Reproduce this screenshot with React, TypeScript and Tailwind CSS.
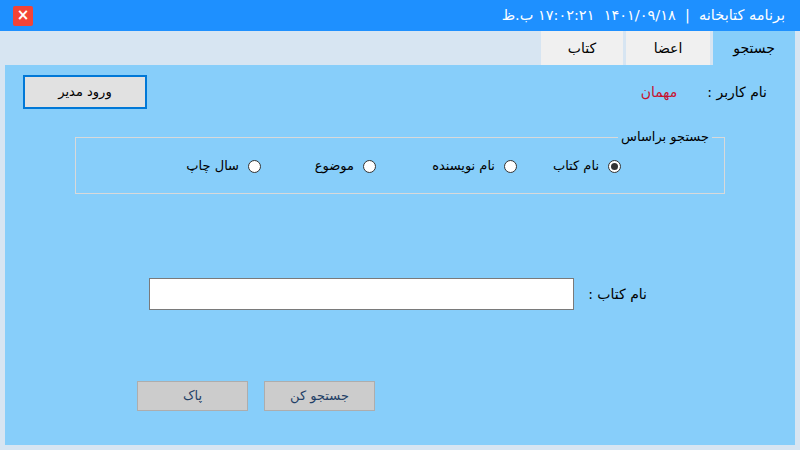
import React, { useState } from "react";

const font = "font-['DejaVu_Sans',sans-serif]";

const options = ["نام کتاب", "نام نویسنده", "موضوع", "سال چاپ"];

const Radio = ({ checked }: { checked: boolean }) => (
    <span className="flex h-[13px] w-[13px] items-center justify-center rounded-full border border-[#333333] bg-white">
        {checked && <span className="h-[7px] w-[7px] rounded-full bg-[#333333]" />}
    </span>
);

const App = () => {
    const [tab, setTab] = useState("جستجو");
    const [option, setOption] = useState("نام کتاب");

    const tabs = [
        { name: "جستجو", w: "w-[82px]" },
        { name: "اعضا", w: "w-[84px]" },
        { name: "کتاب", w: "w-[82px]" },
    ];

    return (
        <div className={`flex h-[450px] w-[800px] flex-col bg-[#d7e5f2] ${font}`}>
            {/* title bar */}
            <div className="flex h-[31px] items-center justify-between bg-[#1e90ff] pl-[13px] pr-[15px]">
                <button className="flex h-[20px] w-[20px] items-center justify-center rounded-[2px] bg-[#f44336] text-[15px] font-bold leading-none text-white">
                    ×
                </button>
                <div dir="rtl" className="text-[14.5px] text-white">
                    برنامه کتابخانه&nbsp; |&nbsp; ۱۴۰۱/۰۹/۱۸&nbsp; ۱۷:۰۲:۲۱ ب.ظ
                </div>
            </div>

            {/* tabs */}
            <div dir="rtl" className="flex h-[34px] pr-[5px]">
                {tabs.map((t) => (
                    <button
                        key={t.name}
                        onClick={() => setTab(t.name)}
                        className={`${t.w} ml-[3px] flex items-center justify-center text-[14px] text-black ${
                            tab === t.name ? "bg-[#87cefa]" : "bg-[#f0f0f0]"
                        }`}
                    >
                        {t.name}
                    </button>
                ))}
            </div>

            {/* panel */}
            <div className="mx-[5px] flex h-[380px] flex-col bg-[#87cefa]">
                <div className="mt-[10px] flex items-center justify-between pl-[18px] pr-[28px]">
                    <button className="h-[34px] w-[124px] border-2 border-[#0078d7] bg-[#e1e1e1] text-[13px] text-black">
                        <span dir="rtl">ورود مدیر</span>
                    </button>
                    <div dir="rtl" className="flex items-center gap-[30px]">
                        <span className="text-[14px] text-black">نام کاربر :</span>
                        <span className="text-[14px] text-[#c8102e]">مهمان</span>
                    </div>
                </div>

                {/* group box */}
                <div className="relative mx-[70px] mt-[28px] h-[57px] border border-[#d9d9d9]">
                    <span
                        dir="rtl"
                        className="absolute right-[12px] top-[-11px] bg-[#87cefa] px-[3px] text-[13px] text-black"
                    >
                        جستجو براساس
                    </span>
                    <div dir="rtl" className="flex h-full items-center pr-[103px] pt-[1px]">
                        {options.map((o, i) => (
                            <label
                                key={o}
                                onClick={() => setOption(o)}
                                className={`flex cursor-pointer items-center gap-[9px] text-[13px] text-black ${
                                    i === 0 ? "w-[104px]" : i === 1 ? "w-[141px]" : "w-[115px]"
                                }`}
                            >
                                <Radio checked={option === o} />
                                <span>{o}</span>
                            </label>
                        ))}
                    </div>
                </div>

                {/* field */}
                <div dir="rtl" className="mt-[84px] flex items-center pr-[148px]">
                    <span className="ml-[14px] text-[14px] text-black">نام کتاب :</span>
                    <input className="h-[32px] w-[425px] border border-[#7a7a7a] bg-white px-[4px] outline-none" />
                </div>

                {/* buttons */}
                <div className="mt-[71px] flex gap-[16px] pl-[132px]">
                    <button className="h-[30px] w-[111px] border border-[#adadad] bg-[#cccccc] text-[13px] text-[#1f3f66]">
                        <span dir="rtl">پاک</span>
                    </button>
                    <button className="h-[30px] w-[111px] border border-[#adadad] bg-[#cccccc] text-[13px] text-[#1f3f66]">
                        <span dir="rtl">جستجو کن</span>
                    </button>
                </div>
            </div>
        </div>
    );
};

export default App;
